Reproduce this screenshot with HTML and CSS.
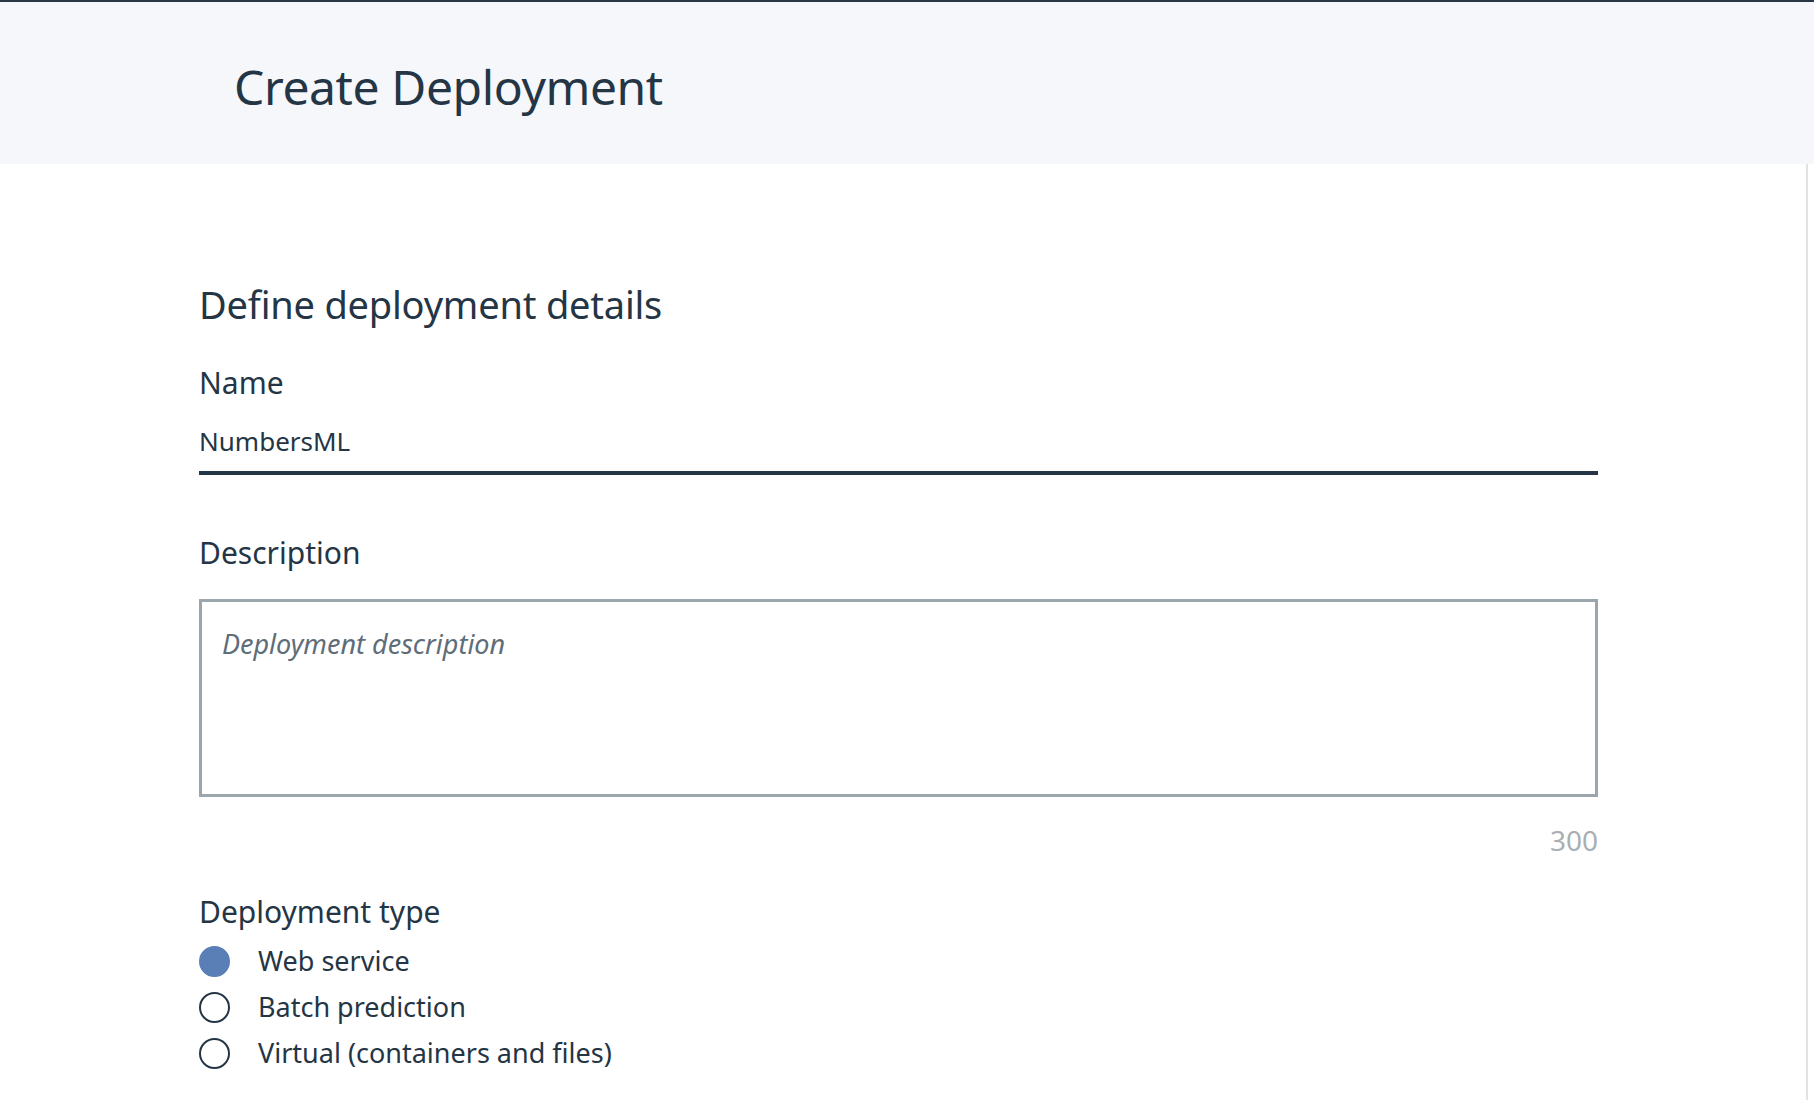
FILE: index.html
```html
<!DOCTYPE html>
<html lang="en">
<head>
<meta charset="utf-8">
<title>Create Deployment</title>
<link rel="stylesheet" href="styles.css">
</head>
<body>
<div class="topbar"></div>
<header class="header">
  <h1 class="title">Create Deployment</h1>
</header>
<main class="main">
  <section class="form">
    <h2 class="section-title">Define deployment details</h2>
    <div class="field field-name">
      <label class="label">Name</label>
      <div class="text-input">NumbersML</div>
    </div>
    <div class="field field-desc">
      <label class="label">Description</label>
      <div class="textarea"><span class="placeholder">Deployment description</span></div>
      <div class="counter">300</div>
    </div>
    <div class="field field-type">
      <div class="label">Deployment type</div>
      <ul class="radios">
        <li class="radio"><span class="dot dot-on"></span><span class="radio-label">Web service</span></li>
        <li class="radio"><span class="dot"></span><span class="radio-label">Batch prediction</span></li>
        <li class="radio"><span class="dot"></span><span class="radio-label">Virtual (containers and files)</span></li>
      </ul>
    </div>
  </section>
</main>
</body>
</html>
```
FILE: styles.css
```css
* { box-sizing: border-box; }
html, body { margin: 0; padding: 0; }
body {
  font-family: "Noto Sans", "Open Sans", sans-serif;
  color: #243545;
  background: #ffffff;
  width: 1814px;
  height: 1100px;
  overflow: hidden;
}
.topbar { height: 2px; background: #283745; }
.header {
  height: 162px;
  background: #f5f7fa;
  display: flex;
  align-items: center;
  padding-left: 234px;
}
.title {
  margin: 0;
  font-weight: 400;
  font-size: 48px;
  line-height: 60px;
  letter-spacing: -0.4px;
  padding-top: 8px;
}
.main {
  height: 936px;
  border-right: 2px solid #dfe3e6;
  width: 1808px;
  padding-left: 199px;
  padding-top: 117px;
}
.form { width: 1399px; }
.section-title {
  margin: 0;
  font-weight: 400;
  font-size: 38px;
  line-height: 46px;
  letter-spacing: -0.2px;
}
.field-name { margin-top: 38px; }
.label {
  display: block;
  font-size: 30px;
  line-height: 36px;
}
.text-input {
  margin-top: 23px;
  font-size: 26px;
  line-height: 34px;
  padding-bottom: 13px;
  border-bottom: 4px solid #243545;
}
.field-desc { margin-top: 60px; }
.textarea {
  margin-top: 28px;
  height: 198px;
  border: 3px solid #9aa6ac;
  padding: 25px 20px;
}
.placeholder {
  font-style: italic;
  font-size: 27px;
  line-height: 34px;
  color: #5e6d78;
}
.counter {
  text-align: right;
  margin-top: 26px;
  font-size: 28px;
  line-height: 34px;
  color: #a9afb3;
}
.field-type { margin-top: 37px; }
.radios { list-style: none; margin: 8px 0 0; padding: 0; }
.radio {
  display: flex;
  align-items: center;
  height: 46px;
}
.dot {
  width: 31px;
  height: 31px;
  border-radius: 50%;
  border: 2px solid #243545;
  flex: none;
}
.dot-on { background: #5a7fb6; border-color: #5a7fb6; }
.radio-label {
  margin-left: 28px;
  font-size: 27px;
  line-height: 34px;
}
```
